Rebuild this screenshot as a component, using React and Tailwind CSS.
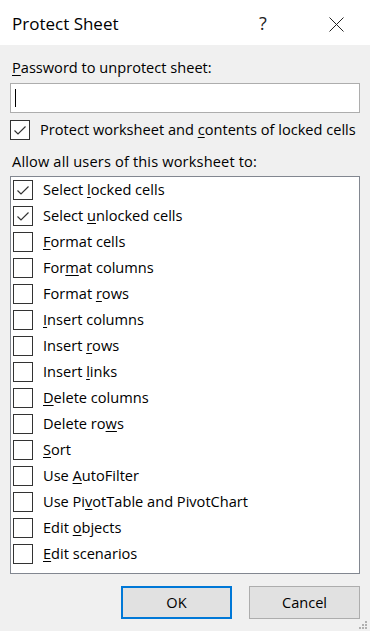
import React from "react";

const font = { fontFamily: '"Open Sans", "Noto Sans", sans-serif' };

const options = [
  { pre: "Select ", key: "l", post: "ocked cells", checked: true },
  { pre: "Select ", key: "u", post: "nlocked cells", checked: true },
  { pre: "", key: "F", post: "ormat cells" },
  { pre: "For", key: "m", post: "at columns" },
  { pre: "Format ", key: "r", post: "ows" },
  { pre: "", key: "I", post: "nsert columns" },
  { pre: "Insert ", key: "r", post: "ows" },
  { pre: "Insert ", key: "l", post: "inks" },
  { pre: "", key: "D", post: "elete columns" },
  { pre: "Delete ro", key: "w", post: "s" },
  { pre: "", key: "S", post: "ort" },
  { pre: "Use ", key: "A", post: "utoFilter" },
  { pre: "Use Pi", key: "v", post: "otTable and PivotChart" },
  { pre: "Edit ", key: "o", post: "bjects" },
  { pre: "", key: "E", post: "dit scenarios" },
];

// small windows style checkbox
const CheckBox = ({ checked }) => (
  <div className="w-[20px] h-[20px] border border-[#333333] bg-white flex items-center justify-center shrink-0">
    {checked && (
      <svg width="14" height="14" viewBox="0 0 14 14" fill="none">
        <path d="M1.5 7.5 L5 11 L12.5 3.5" stroke="#333333" strokeWidth="1.2" />
      </svg>
    )}
  </div>
);

const Label = ({ pre, k, post }) => (
  <span className="whitespace-nowrap">
    {pre}
    <span className="underline underline-offset-2">{k}</span>
    {post}
  </span>
);

export default function App() {
  return (
    <div className="w-[370px] h-[631px] bg-[#f0f0f0] text-black relative overflow-hidden" style={font}>
      {/* title bar */}
      <div className="h-[45px] bg-white flex items-center relative">
        <span className="ml-[12px] text-[17px] mt-[2px]">Protect Sheet</span>
        <span className="absolute left-[259px] top-[10px] text-[18px] text-[#222]">?</span>
        <svg className="absolute left-[329px] top-[17px]" width="15" height="15" viewBox="0 0 15 15">
          <path d="M0.5 0.5 L14.5 14.5 M14.5 0.5 L0.5 14.5" stroke="#222" strokeWidth="1" />
        </svg>
      </div>

      <div className="px-[10px] text-[14.6px]">
        <div className="ml-[2px] mt-[12px] leading-[20px]">
          <Label pre="" k="P" post="assword to unprotect sheet:" />
        </div>
        <div className="mt-[6px] h-[30px] bg-white border border-[#adadad] flex items-center">
          <div className="ml-[4px] w-[1px] h-[18px] bg-black" />
        </div>
        <div className="mt-[7px] flex items-center h-[20px]">
          <CheckBox checked />
          <span className="ml-[10px]">
            <Label pre="Protect worksheet and " k="c" post="ontents of locked cells" />
          </span>
        </div>
        <div className="ml-[2px] mt-[11px] leading-[20px] whitespace-nowrap tracking-[0.15px]">Allow all users of this worksheet to:</div>

        <div className="mt-[5px] h-[398px] bg-white border border-[#828790] pl-[2px]">
          {options.map((o, i) => (
            <div key={i} className="h-[26px] flex items-center">
              <CheckBox checked={o.checked} />
              <span className="ml-[10px]">
                <Label pre={o.pre} k={o.key} post={o.post} />
              </span>
            </div>
          ))}
        </div>

        <div className="mt-[12px] flex justify-end gap-[17px]">
          <button className="w-[111px] h-[33px] bg-[#e1e1e1] border-2 border-[#0078d7]">OK</button>
          <button className="w-[111px] h-[33px] bg-[#e1e1e1] border border-[#adadad]">Cancel</button>
        </div>
      </div>

      {/* size grip */}
      <svg className="absolute right-[2px] bottom-[1px]" width="10" height="10" viewBox="0 0 10 10" fill="#b0b0b0">
        <rect x="7" y="1" width="2" height="2" />
        <rect x="4" y="4" width="2" height="2" />
        <rect x="7" y="4" width="2" height="2" />
        <rect x="1" y="7" width="2" height="2" />
        <rect x="4" y="7" width="2" height="2" />
        <rect x="7" y="7" width="2" height="2" />
      </svg>
    </div>
  );
}
